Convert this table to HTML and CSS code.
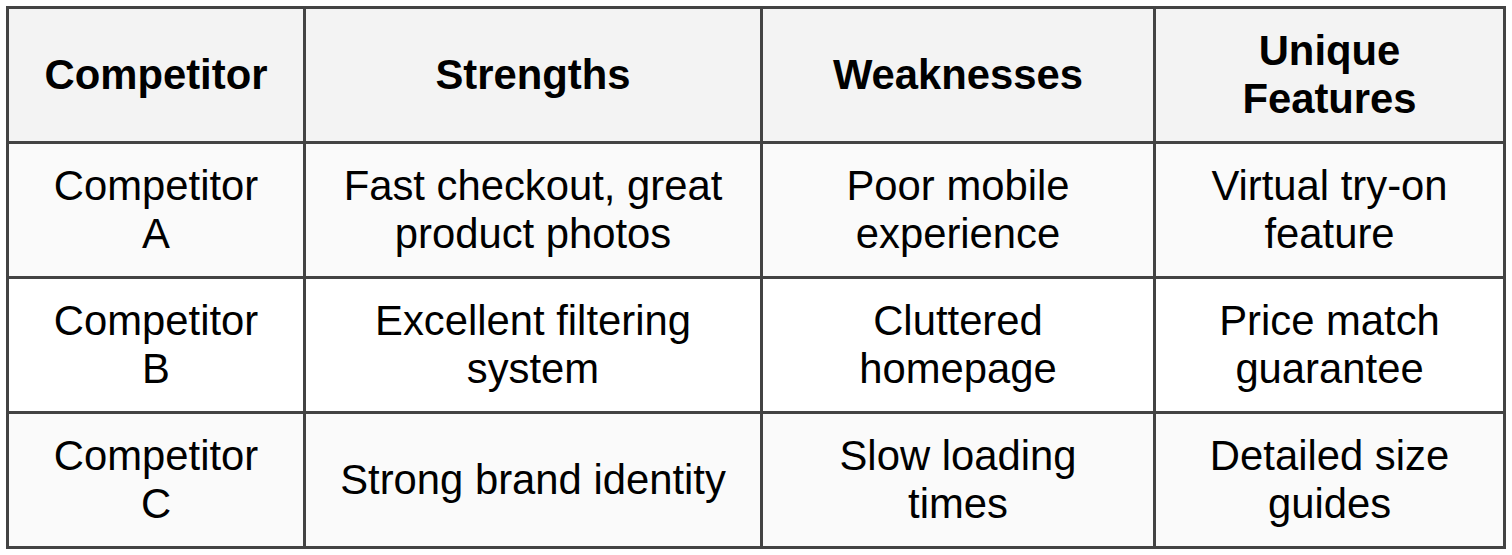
FILE: index.html
```html
<!DOCTYPE html>
<html lang="en">
<head>
<meta charset="utf-8">
<title>Competitor comparison</title>
<link rel="stylesheet" href="styles.css">
</head>
<body>
<div class="table" role="table">
  <div class="cell head" role="columnheader">Competitor</div>
  <div class="cell head" role="columnheader">Strengths</div>
  <div class="cell head" role="columnheader">Weaknesses</div>
  <div class="cell head" role="columnheader">Unique Features</div>

  <div class="cell odd">Competitor A</div>
  <div class="cell odd">Fast checkout, great product photos</div>
  <div class="cell odd">Poor mobile experience</div>
  <div class="cell odd">Virtual try-on feature</div>

  <div class="cell even">Competitor B</div>
  <div class="cell even">Excellent filtering system</div>
  <div class="cell even">Cluttered homepage</div>
  <div class="cell even">Price match guarantee</div>

  <div class="cell odd">Competitor C</div>
  <div class="cell odd">Strong brand identity</div>
  <div class="cell odd">Slow loading times</div>
  <div class="cell odd">Detailed size guides</div>
</div>
</body>
</html>
```
FILE: styles.css
```css
html, body {
  margin: 0;
  padding: 0;
  background: #ffffff;
}

body {
  padding: 6px;
  font-family: "Liberation Sans", Arial, sans-serif;
  color: #000000;
}

.table {
  display: grid;
  grid-template-columns: 297px 457px 393px 350px;
  grid-auto-rows: 135px;
  width: max-content;
  border-top: 3px solid #434343;
  border-left: 3px solid #434343;
}

.cell {
  display: flex;
  align-items: center;
  justify-content: center;
  text-align: center;
  padding: 0 30px;
  font-size: 41.8px;
  line-height: 48px;
  border-right: 3px solid #434343;
  border-bottom: 3px solid #434343;
}

.head {
  background: #f3f3f3;
  font-weight: bold;
}

.odd {
  background: #fafafa;
}

.even {
  background: #ffffff;
}
```
